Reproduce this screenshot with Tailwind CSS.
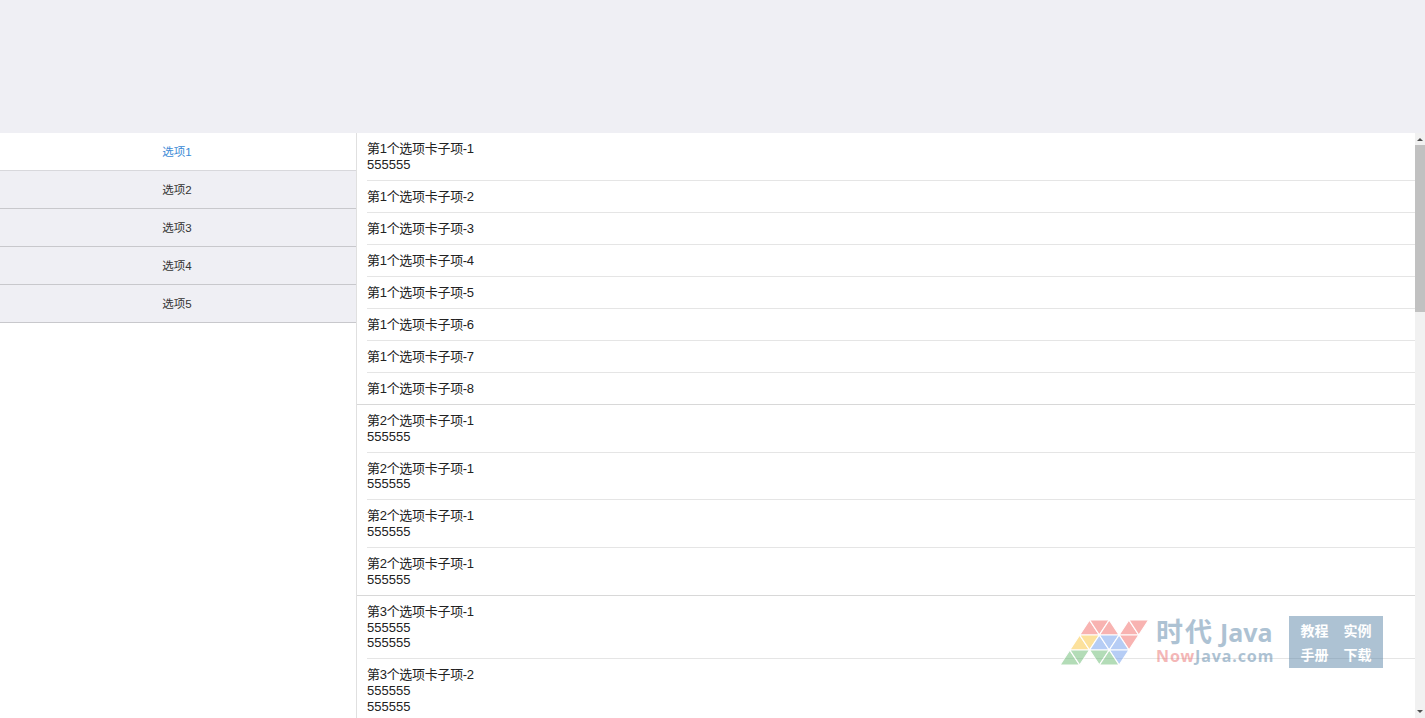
<!DOCTYPE html>
<html lang="zh">
<head>
<meta charset="utf-8">
<script src="https://cdn.jsdelivr.net/npm/@tailwindcss/browser@4"></script>
</head>
<body class="relative h-[718px] w-[1425px] overflow-hidden bg-white font-['Liberation_Sans','Noto_Sans_CJK_SC',sans-serif] text-[#333]">
<header class="h-[133px] bg-[#efeff4]"></header>
<main class="flex h-[585px]">
  <nav class="w-[356px] shrink-0 text-center text-[11.5px]">
    <div class="flex h-[38px] items-center justify-center border-b border-[#d8d8dc] bg-white pr-[2px] pt-[2px] text-[#3b8ad6]">选项1</div>
    <div class="flex h-[38px] items-center justify-center border-b border-[#c8c8cc] bg-[#efeff4] pr-[2px] pt-[2px]">选项2</div>
    <div class="flex h-[38px] items-center justify-center border-b border-[#c8c8cc] bg-[#efeff4] pr-[2px] pt-[2px]">选项3</div>
    <div class="flex h-[38px] items-center justify-center border-b border-[#c8c8cc] bg-[#efeff4] pr-[2px] pt-[2px]">选项4</div>
    <div class="flex h-[38px] items-center justify-center border-b border-[#c8c8cc] bg-[#efeff4] pr-[2px] pt-[2px]">选项5</div>
  </nav>
  <section class="flex min-w-0 flex-1 border-l border-[#e0e0e0]">
    <div class="h-full min-w-0 flex-1 overflow-hidden text-[13px] leading-[15.75px] text-[#222]">
      <div class="border-b border-[#d8d8d8]">
        <div class="ml-[10px] border-b border-[#e5e5e5] pb-[7.25px] pt-[8px]"><span class="tracking-[-0.3px]">第1个选项卡子项-1</span><br>555555</div>
        <div class="ml-[10px] border-b border-[#e5e5e5] pb-[7.25px] pt-[8px]"><span class="tracking-[-0.3px]">第1个选项卡子项-2</span></div>
        <div class="ml-[10px] border-b border-[#e5e5e5] pb-[7.25px] pt-[8px]"><span class="tracking-[-0.3px]">第1个选项卡子项-3</span></div>
        <div class="ml-[10px] border-b border-[#e5e5e5] pb-[7.25px] pt-[8px]"><span class="tracking-[-0.3px]">第1个选项卡子项-4</span></div>
        <div class="ml-[10px] border-b border-[#e5e5e5] pb-[7.25px] pt-[8px]"><span class="tracking-[-0.3px]">第1个选项卡子项-5</span></div>
        <div class="ml-[10px] border-b border-[#e5e5e5] pb-[7.25px] pt-[8px]"><span class="tracking-[-0.3px]">第1个选项卡子项-6</span></div>
        <div class="ml-[10px] border-b border-[#e5e5e5] pb-[7.25px] pt-[8px]"><span class="tracking-[-0.3px]">第1个选项卡子项-7</span></div>
        <div class="ml-[10px] pb-[7.25px] pt-[8px]"><span class="tracking-[-0.3px]">第1个选项卡子项-8</span></div>
      </div>
      <div class="border-b border-[#d8d8d8]">
        <div class="ml-[10px] border-b border-[#e5e5e5] pb-[7.25px] pt-[8px]"><span class="tracking-[-0.3px]">第2个选项卡子项-1</span><br>555555</div>
        <div class="ml-[10px] border-b border-[#e5e5e5] pb-[7.25px] pt-[8px]"><span class="tracking-[-0.3px]">第2个选项卡子项-1</span><br>555555</div>
        <div class="ml-[10px] border-b border-[#e5e5e5] pb-[7.25px] pt-[8px]"><span class="tracking-[-0.3px]">第2个选项卡子项-1</span><br>555555</div>
        <div class="ml-[10px] pb-[7.25px] pt-[8px]"><span class="tracking-[-0.3px]">第2个选项卡子项-1</span><br>555555</div>
      </div>
      <div>
        <div class="ml-[10px] border-b border-[#e5e5e5] pb-[7.25px] pt-[8px]"><span class="tracking-[-0.3px]">第3个选项卡子项-1</span><br>555555<br>555555</div>
        <div class="ml-[10px] border-b border-[#e5e5e5] pb-[7.25px] pt-[8px]"><span class="tracking-[-0.3px]">第3个选项卡子项-2</span><br>555555<br>555555</div>
      </div>
    </div>
    <div class="flex w-[10px] shrink-0 flex-col items-center bg-[#f1f1f1]">
      <svg class="h-[12px] w-[10px] shrink-0" viewBox="0 0 10 12"><path d="M2 8h6L5 5z" fill="#505050"/></svg>
      <div class="h-[167px] w-full shrink-0 bg-[#c1c1c1]"></div>
      <div class="flex-1"></div>
      <svg class="h-[12px] w-[10px] shrink-0" viewBox="0 0 10 12"><path d="M2 4h6L5 7z" fill="#505050"/></svg>
    </div>
  </section>
</main>
<aside class="absolute left-[1060px] top-[616px] flex h-[52px] w-[323px] opacity-50">
  <svg class="mt-[4px] h-[45px] w-[89px] shrink-0" viewBox="0 0 89 45" stroke="#ffffff" stroke-width="1.2">
    <g fill="#f36a66">
      <path d="M19.7 15H39.4L29.55 0z"/><path d="M29.55 0H49.25L39.4 15z"/><path d="M39.4 15H59.1L49.25 0z"/>
      <path d="M59.1 15H78.8L68.95 0z"/><path d="M68.95 0H88.65L78.8 15z"/><path d="M59.1 15H78.8L68.95 30z"/>
    </g>
    <g fill="#fbc53c">
      <path d="M9.85 30H29.55L19.7 15z"/><path d="M19.7 15H39.4L29.55 30z"/>
    </g>
    <g fill="#6f9dec">
      <path d="M29.55 30H49.25L39.4 15z"/><path d="M39.4 15H59.1L49.25 30z"/><path d="M49.25 30H68.95L59.1 15z"/><path d="M49.25 30H68.95L59.1 45z"/>
    </g>
    <g fill="#69bb72">
      <path d="M0 45H19.7L9.85 30z"/><path d="M9.85 30H29.55L19.7 45z"/><path d="M29.55 30H49.25L39.4 45z"/><path d="M39.4 45H59.1L49.25 30z"/>
    </g>
  </svg>
  <div class="ml-[7px] w-[118px] shrink-0 font-['Noto_Sans','Noto_Sans_CJK_SC',sans-serif] font-bold text-[#5d87a9]">
    <div class="flex h-[32px] items-center whitespace-nowrap text-[25px] leading-[32px]"><span class="shrink-0 text-[27px] tracking-[2px]">时代</span><span class="ml-[6px] shrink-0">Java</span></div>
    <div class="whitespace-nowrap text-[16px] leading-[16px] tracking-[0.9px]"><span class="text-[#eb7171]">Now</span>Java.com</div>
  </div>
  <div class="ml-[15px] grid h-[52px] w-[94px] shrink-0 grid-cols-[28px_28px] grid-rows-[24px_24px] content-center items-center justify-center gap-x-[15px] bg-[#5d87a9] font-['Noto_Sans_CJK_SC',sans-serif] text-sm font-bold text-white">
    <span>教程</span><span>实例</span><span>手册</span><span>下载</span>
  </div>
</aside>
</body>
</html>
